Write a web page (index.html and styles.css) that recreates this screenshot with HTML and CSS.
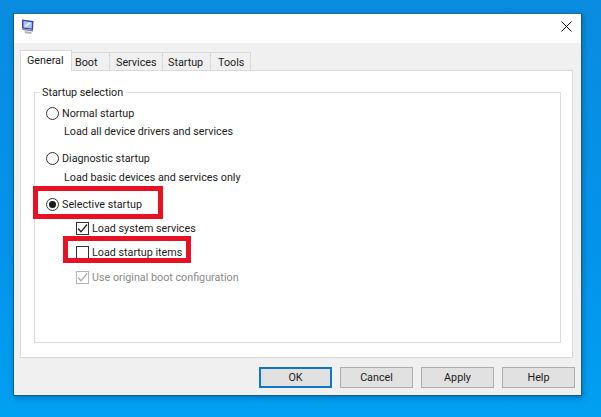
FILE: index.html
```html
<!DOCTYPE html>
<html>
    <head>
        <meta charset="UTF-8">
        <title>System Configuration</title>
        <link rel="stylesheet" href="styles.css">
    </head>
    <body>
        <div class="dialog">
            <div class="titlebar">
                <svg class="app-icon" width="15" height="17" viewBox="0 0 15 17">
                    <path d="M2 1.5 L13.5 3 L13 12 L2 10.5 Z" fill="#3b48a8"/>
                    <path d="M3.5 3 L12 4.2 L11.7 10.6 L3.5 9.4 Z" fill="#a9c6ee"/>
                    <path d="M5 8.6 L10 5" stroke="#f4f8ff" stroke-width="1.2"/>
                    <path d="M2 10.5 L13 12 L13 13.5 L2.5 12 Z" fill="#7d84b8"/>
                    <path d="M4.5 13 L11.5 14 L11.5 16 L5 15.2 Z" fill="#b5b5bd"/>
                </svg>
                <svg class="close" width="11" height="11" viewBox="0 0 11 11">
                    <path d="M.5 .5 L10.5 10.5 M10.5 .5 L.5 10.5" stroke="#111" stroke-width="1" fill="none"/>
                </svg>
            </div>
            <div class="body">
                <div class="tabs">
                    <div class="tab active">General</div>
                    <div class="tab boot">Boot</div>
                    <div class="tab services">Services</div>
                    <div class="tab startup">Startup</div>
                    <div class="tab tools">Tools</div>
                </div>
                <div class="pane">
                    <div class="group">
                        <div class="legend">Startup selection</div>
                        <div class="row first"><span class="radio"></span>Normal startup</div>
                        <div class="desc">Load all device drivers and services</div>
                        <div class="row second"><span class="radio"></span>Diagnostic startup</div>
                        <div class="desc lower">Load basic devices and services only</div>
                        <div class="row third"><span class="radio on"></span>Selective startup</div>
                        <div class="row sub">
                            <span class="check">
                                <svg width="11" height="11" viewBox="0 0 11 11"><path d="M1 5.5 L4 8.8 L10 1.5" stroke="#222" stroke-width="1.3" fill="none"/></svg>
                            </span>Load system services
                        </div>
                        <div class="row sub"><span class="check"></span>Load startup items</div>
                        <div class="row sub off">
                            <span class="check">
                                <svg width="11" height="11" viewBox="0 0 11 11"><path d="M1 5.5 L4 8.8 L10 1.5" stroke="#a8a8a8" stroke-width="1.3" fill="none"/></svg>
                            </span>Use original boot configuration
                        </div>
                        <!-- red annotations drawn on top of the screenshot -->
                        <div class="mark mark-radio"></div>
                        <div class="mark mark-check"></div>
                    </div>
                </div>
                <div class="actions">
                    <button class="btn default">OK</button>
                    <button class="btn">Cancel</button>
                    <button class="btn">Apply</button>
                    <button class="btn">Help</button>
                </div>
            </div>
        </div>
    </body>
</html>
```

FILE: styles.css
```css
html, body {
  height: 100%;
}

body {
  margin: 0;
  padding: 13px 19px 21px 13px;
  box-sizing: border-box;
  background: linear-gradient(to bottom, #0a8ce0, #0394ea 60%, #02a0f2);
  font-family: Roboto, "Noto Sans", sans-serif;
  font-size: 10.75px;
  color: #1c1c1c;
}

.dialog {
  height: 383px;
  box-sizing: border-box;
  display: flex;
  flex-direction: column;
  background: #f0f0f0;
  border: 1px solid #155a86;
  border-top-color: #1a6ea4;
  box-shadow: 1px 2px 6px rgba(0, 40, 90, 0.35);
}

.titlebar {
  height: 29px;
  flex: none;
  background: #fff;
  display: flex;
  justify-content: space-between;
  align-items: center;
  padding: 0 9px 4px 6px;
  box-sizing: border-box;
}

.body {
  flex: 1;
  display: flex;
  flex-direction: column;
  padding: 7px 8px 7px 6px;
}

.tabs {
  display: flex;
  align-items: flex-end;
  height: 20px;
  position: relative;
  z-index: 1;
}

.tab {
  height: 18px;
  box-sizing: border-box;
  line-height: 19px;
  background: #f0f0f0;
  border: 1px solid #d9d9d9;
  border-bottom: 0;
  border-left: 0;
}

.tab.active {
  height: 21px;
  width: 52px;
  margin-bottom: -1px;
  padding-left: 6px;
  line-height: 20px;
  background: #fff;
  border-left: 1px solid #d9d9d9;
}

.boot { width: 38px; padding-left: 3px; }
.services { width: 53px; padding-left: 6px; }
.startup { width: 48px; padding-left: 5px; }
.tools { width: 40px; padding-left: 7px; }

.pane {
  height: 288px;
  box-sizing: border-box;
  background: #fff;
  border: 1px solid #d9d9d9;
  padding: 21px 11px 14px 13px;
}

.group {
  height: 100%;
  box-sizing: border-box;
  position: relative;
  border: 1px solid #dcdcdc;
  padding: 0 0 0 11px;
}

.legend {
  position: absolute;
  top: -8px;
  left: 5px;
  padding: 0 3px 0 2px;
  background: #fff;
  line-height: 16px;
}

.row {
  display: flex;
  align-items: center;
  height: 16px;
}

.first { margin-top: 12px; }
.second { margin-top: 10px; }
.third { margin-top: 10px; }

.desc {
  height: 16px;
  line-height: 16px;
  margin-top: 3px;
  padding-left: 18px;
}

.lower {
  margin-top: 4px;
}

.sub {
  margin-top: 8px;
  padding-left: 30px;
}

.off {
  margin-top: 9px;
  color: #8a8a8a;
}

.radio {
  width: 13px;
  height: 13px;
  box-sizing: border-box;
  flex: none;
  margin-right: 3px;
  border: 1px solid #333;
  border-radius: 50%;
  background: #fff;
  display: flex;
  align-items: center;
  justify-content: center;
}

.radio.on::after {
  content: "";
  width: 7px;
  height: 7px;
  border-radius: 50%;
  background: #1a1a1a;
}

.check {
  width: 13px;
  height: 13px;
  box-sizing: border-box;
  flex: none;
  margin-right: 3px;
  border: 1px solid #333;
  background: #fff;
  display: flex;
  align-items: center;
  justify-content: center;
}

.off .check {
  border-color: #b5b5b5;
}

.mark {
  position: absolute;
  box-sizing: border-box;
  border: 5px solid #e81123;
}

.mark-radio {
  left: -2px;
  top: 93px;
  width: 130px;
  height: 33px;
}

.mark-check {
  left: 28px;
  top: 143px;
  width: 128px;
  height: 27px;
}

.actions {
  display: flex;
  justify-content: flex-end;
  gap: 8px;
  margin: 9px -2px 0 0;
}

.btn {
  width: 73px;
  height: 21px;
  padding: 0;
  border: 1px solid #adadad;
  background: #e1e1e1;
  font: inherit;
  color: #1c1c1c;
}

.default {
  border: 2px solid #0f78c8;
}
```
